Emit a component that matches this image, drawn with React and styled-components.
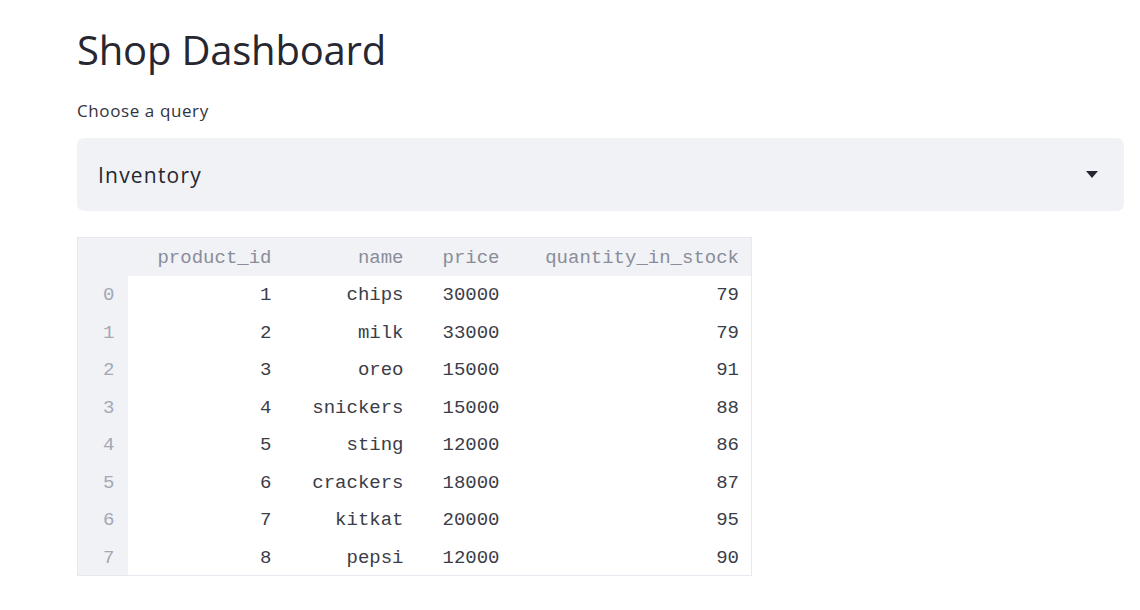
import styled, { createGlobalStyle } from 'styled-components';

const GlobalStyle = createGlobalStyle`
  body {
    margin: 0;
    background: #ffffff;
    font-family: 'Open Sans', 'Liberation Sans', sans-serif;
    color: #31333f;
  }
`;

const Main = styled.div`
  padding: 22px 16px 0 77px;
`;

const Title = styled.h1`
  margin: 0;
  font-size: 40px;
  font-weight: 400;
  line-height: 56px;
  color: #262730;
  letter-spacing: -0.2px;
`;

const Label = styled.div`
  margin-top: 21px;
  font-size: 17px;
  line-height: 24px;
  color: #31333f;
  letter-spacing: 0.6px;
`;

const Select = styled.div`
  margin-top: 15px;
  height: 73px;
  background: #f0f2f6;
  border-radius: 7px;
  display: flex;
  align-items: center;
  justify-content: space-between;
  padding: 0 26px 0 21px;
  font-size: 21px;
  letter-spacing: 1.2px;
  color: #262730;
`;

const Table = styled.table`
  margin-top: 26px;
  border-collapse: collapse;
  border: 1px solid #e6e9ef;
  font-family: 'Liberation Mono', 'DejaVu Sans Mono', monospace;
  font-size: 19px;
  table-layout: fixed;
`;

const Th = styled.th`
  background: #f0f2f6;
  color: #8a8d99;
  font-weight: 400;
  height: 38px;
  padding: 2px 12px 0 ${(p) => p.$pl || 12}px;
  width: ${(p) => p.$w}px;
  box-sizing: border-box;
  text-align: ${(p) => (p.$left ? 'left' : 'right')};
  white-space: nowrap;
`;

const IndexCell = styled.td`
  background: #f0f2f6;
  color: #a3a8b4;
  height: 37.5px;
  box-sizing: border-box;
  padding: 2px 13px 0 0;
  text-align: right;
`;

const Td = styled.td`
  color: #3b3d48;
  height: 37.5px;
  box-sizing: border-box;
  padding: 2px 12px 0 ${(p) => p.$pl || 12}px;
  text-align: ${(p) => (p.$left ? 'left' : 'right')};
  white-space: nowrap;
`;

const rows = [
  [1, 'chips', '30000', 79],
  [2, 'milk', '33000', 79],
  [3, 'oreo', '15000', 91],
  [4, 'snickers', '15000', 88],
  [5, 'sting', '12000', 86],
  [6, 'crackers', '18000', 87],
  [7, 'kitkat', '20000', 95],
  [8, 'pepsi', '12000', 90],
];

export default function App() {
  return (
    <Main>
      <GlobalStyle />
      <Title>Shop Dashboard</Title>
      <Label>Choose a query</Label>
      <Select>
        <span>Inventory</span>
        <svg width="12" height="7" viewBox="0 0 12 7">
          <path d="M0 0h12L6 7z" fill="#262730" />
        </svg>
      </Select>
      <Table>
        <thead>
          <tr>
            <Th $w={50} />
            <Th $w={156}>product_id</Th>
            <Th $w={132}>name</Th>
            <Th $w={96} $left $pl={27}>price</Th>
            <Th $w={240}>quantity_in_stock</Th>
          </tr>
        </thead>
        <tbody>
          {rows.map((r, i) => (
            <tr key={i}>
              <IndexCell>{i}</IndexCell>
              <Td>{r[0]}</Td>
              <Td>{r[1]}</Td>
              <Td $left $pl={27}>{r[2]}</Td>
              <Td>{r[3]}</Td>
            </tr>
          ))}
        </tbody>
      </Table>
    </Main>
  );
}
